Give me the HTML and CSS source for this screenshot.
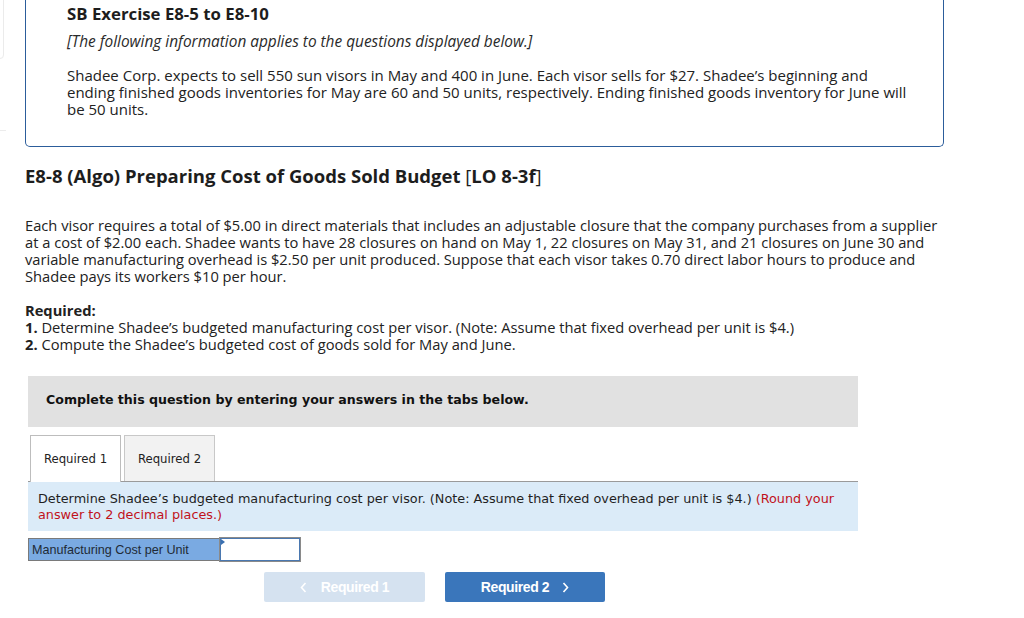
FILE: index.html
```html
<!DOCTYPE html>
<html lang="en">
<head>
<meta charset="utf-8">
<title>E8-8 (Algo) Preparing Cost of Goods Sold Budget</title>
<link rel="stylesheet" href="styles.css">
</head>
<body>
<div class="edge-card"></div>
<div class="edge-line"></div>
<main class="page">
  <section class="intro">
    <h2 class="intro-title">SB Exercise E8-5 to E8-10</h2>
    <p class="intro-note">[The following information applies to the questions displayed below.]</p>
    <p class="intro-text">Shadee Corp. expects to sell 550 sun visors in May and 400 in June. Each visor sells for $27. Shadee’s beginning and ending finished goods inventories for May are 60 and 50 units, respectively. Ending finished goods inventory for June will be 50 units.</p>
  </section>

  <h1 class="title">E8-8 (Algo) Preparing Cost of Goods Sold Budget <span class="lo">[</span>LO 8-3f<span class="lo">]</span></h1>

  <p class="body-text">Each visor requires a total of $5.00 in direct materials that includes an adjustable closure that the company purchases from a supplier at a cost of $2.00 each. Shadee wants to have 28 closures on hand on May 1, 22 closures on May 31, and 21 closures on June 30 and variable manufacturing overhead is $2.50 per unit produced. Suppose that each visor takes 0.70 direct labor hours to produce and Shadee pays its workers $10 per hour.</p>

  <div class="required">
    <p class="req-head">Required:</p>
    <p class="req-item"><b>1.</b> Determine Shadee’s budgeted manufacturing cost per visor. (Note: Assume that fixed overhead per unit is $4.)</p>
    <p class="req-item"><b>2.</b> Compute the Shadee’s budgeted cost of goods sold for May and June.</p>
  </div>

  <section class="question">
    <div class="instruct">Complete this question by entering your answers in the tabs below.</div>
    <div class="tabs">
      <div class="tab tab-active">Required 1</div>
      <div class="tab">Required 2</div>
    </div>
    <div class="prompt">Determine Shadee’s budgeted manufacturing cost per visor. (Note: Assume that fixed overhead per unit is $4.) <span class="red">(Round your answer to 2 decimal places.)</span></div>
    <div class="answer-row">
      <div class="answer-label">Manufacturing Cost per Unit</div>
      <div class="answer-input"><span class="flag"></span></div>
    </div>
    <div class="nav">
      <div class="btn btn-disabled"><svg class="chev" width="7" height="11" viewBox="0 0 7 11"><path d="M5.5 1 1.5 5.5 5.5 10" fill="none" stroke="currentColor" stroke-width="1.6"/></svg><span class="btn-label">Required 1</span></div>
      <div class="btn btn-primary"><span class="btn-label">Required 2</span><svg class="chev chev-r" width="7" height="11" viewBox="0 0 7 11"><path d="M1.5 1 5.5 5.5 1.5 10" fill="none" stroke="currentColor" stroke-width="1.6"/></svg></div>
    </div>
  </section>
</main>
</body>
</html>
```

FILE: styles.css
```css
html, body {
  margin: 0;
  padding: 0;
  background: #ffffff;
}
body {
  font-family: "Open Sans", "Noto Sans", sans-serif;
  color: #222222;
  position: relative;
  width: 1024px;
  height: 618px;
  overflow: hidden;
}
.edge-card {
  position: absolute;
  left: -8px;
  top: -10px;
  width: 10px;
  height: 67px;
  border: 1px solid #ebebeb;
  border-radius: 4px;
}
.edge-line {
  position: absolute;
  left: 0;
  top: 130px;
  width: 6px;
  height: 1px;
  background: #ececec;
}
.page {
  padding-left: 25px;
}
.intro {
  width: 876px;
  border: 1px solid #2c5d9b;
  border-top: none;
  border-radius: 0 0 5px 5px;
  padding: 4px 0 28px 41px;
}
.intro-title {
  margin: 0;
  font-size: 16.8px;
  line-height: 20px;
  font-weight: 700;
  color: #1d1d1d;
}
.intro-note {
  margin: 9px 0 0;
  font-size: 15.4px;
  line-height: 17px;
  font-style: italic;
  color: #2a2a2a;
}
.intro-text {
  margin: 17px 0 0;
  font-size: 15px;
  line-height: 17px;
  width: 840px;
}
.title {
  margin: 18px 0 0;
  font-size: 18.5px;
  line-height: 22px;
  font-weight: 700;
  color: #1d1d1d;
}
.lo {
  font-weight: 400;
}
.body-text {
  margin: 30px 0 0;
  font-size: 14.7px;
  line-height: 17px;
  width: 915px;
}
.required {
  margin-top: 17px;
  font-size: 14.7px;
  line-height: 17px;
}
.required p {
  margin: 0;
}
.req-head {
  font-weight: 700;
}
.question {
  margin: 23px 0 0 3px;
  width: 830px;
}
.instruct {
  height: 47px;
  padding: 0 0 4px 18px;
  background: #e1e1e1;
  display: flex;
  align-items: center;
  font-family: "DejaVu Sans", Verdana, sans-serif;
  font-size: 12.6px;
  font-weight: 700;
  color: #111111;
}
.tabs {
  margin-top: 8px;
  padding-left: 2px;
  display: flex;
  gap: 3px;
  border-bottom: 1px solid #9a9a9a;
}
.tab {
  width: 89px;
  height: 45px;
  border: 1px solid #c8c8c8;
  border-bottom: none;
  background: #f2f2f2;
  display: flex;
  align-items: center;
  justify-content: center;
  font-family: "DejaVu Sans", Verdana, sans-serif;
  font-size: 11.7px;
  color: #222222;
}
.tab-active {
  background: #ffffff;
  height: 46px;
  margin-bottom: -1px;
  border-color: #bdbdbd;
}
.prompt {
  background: #dbebf8;
  padding: 9px 10px 8px;
  font-family: "DejaVu Sans", Verdana, sans-serif;
  font-size: 12.8px;
  line-height: 16px;
  color: #1f1f1f;
}
.red {
  color: #c1121b;
}
.answer-row {
  margin-top: 7px;
  display: flex;
  height: 23px;
}
.answer-label {
  width: 188px;
  background: #7aaae2;
  border: 1px solid #7a7a7a;
  border-right: none;
  padding-left: 3px;
  display: flex;
  align-items: center;
  font-family: "Liberation Sans", Arial, sans-serif;
  font-size: 12.6px;
  color: #1f2a36;
}
.answer-input {
  position: relative;
  width: 78px;
  background: #ffffff;
  border: 1px solid #4a78b0;
  outline: 1px solid #8a8a8a;
}
.flag {
  position: absolute;
  left: 0;
  top: 0;
  width: 0;
  height: 0;
  border-top: 3px solid transparent;
  border-bottom: 3px solid transparent;
  border-left: 4px solid #3a6fb0;
}
.nav {
  margin: 11px 0 0 236px;
  display: flex;
  gap: 20px;
}
.btn {
  width: 161px;
  height: 30px;
  border-radius: 2px;
  display: flex;
  align-items: center;
  justify-content: center;
  font-family: "Liberation Sans", Arial, sans-serif;
  font-size: 14px;
  font-weight: 700;
  letter-spacing: -0.4px;
  color: #ffffff;
}
.btn-disabled {
  background: #d5e2f0;
}
.btn-primary {
  background: #3a76bb;
  width: 160px;
}
.chev {
  display: block;
  margin-right: 14px;
}
.chev-r {
  margin-right: 0;
  margin-left: 13px;
}
```
